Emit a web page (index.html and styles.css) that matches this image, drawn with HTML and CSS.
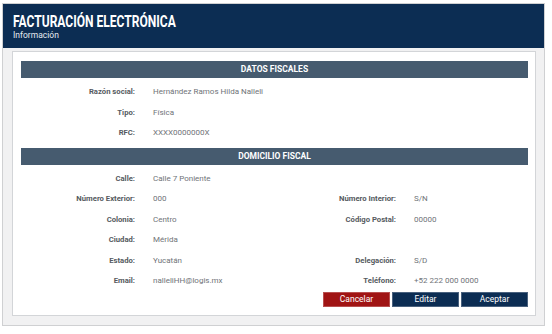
FILE: index.html
```html
<!DOCTYPE html>
<html lang="es">
<head>
<meta charset="utf-8">
<title>Facturación electrónica</title>
<link rel="stylesheet" href="styles.css">
</head>
<body>
<div class="frame">
  <header class="header">
    <h1 class="title"><span class="title-text">FACTURACIÓN ELECTRÓNICA</span></h1>
    <div class="subtitle">Información</div>
  </header>
  <main class="card">
    <section class="section">
      <div class="bar">DATOS FISCALES</div>
      <div class="grid">
        <div class="label">Razón social:</div><div class="value wide">Hernández Ramos Hilda Nalleli</div>
        <div class="label">Tipo:</div><div class="value wide">Física</div>
        <div class="label">RFC:</div><div class="value wide">XXXX0000000X</div>
      </div>
    </section>
    <section class="section">
      <div class="bar">DOMICILIO FISCAL</div>
      <div class="grid">
        <div class="label">Calle:</div><div class="value">Calle 7 Poniente</div><div class="label"></div><div class="value"></div>
        <div class="label">Número Exterior:</div><div class="value">000</div><div class="label">Número Interior:</div><div class="value">S/N</div>
        <div class="label">Colonia:</div><div class="value">Centro</div><div class="label">Código Postal:</div><div class="value">00000</div>
        <div class="label">Ciudad:</div><div class="value">Mérida</div><div class="label"></div><div class="value"></div>
        <div class="label">Estado:</div><div class="value">Yucatán</div><div class="label">Delegación:</div><div class="value">S/D</div>
        <div class="label">Email:</div><div class="value">nalleliHH@logis.mx</div><div class="label">Teléfono:</div><div class="value">+52 222 000 0000</div>
      </div>
    </section>
    <div class="actions">
      <button class="btn btn-cancel">Cancelar</button>
      <button class="btn btn-primary">Editar</button>
      <button class="btn btn-primary">Aceptar</button>
    </div>
  </main>
</div>
</body>
</html>
```

FILE: styles.css
```css
* { box-sizing: border-box; }
html, body { margin: 0; padding: 0; background: #ffffff; }
body {
  font-family: Roboto, "Liberation Sans", Arial, sans-serif;
  padding: 3px 7px 8px 2px;
}
.frame {
  border: 1px solid #cfd0d2;
  background: #f1f1f2;
  display: flex;
  flex-direction: column;
  height: 323px;
}
.header {
  background: #0c2d53;
  height: 44px;
  padding: 0 10px;
  color: #ffffff;
  display: flex;
  flex-direction: column;
  justify-content: center;
}
.title {
  margin: 0;
  font-size: 16.5px;
  line-height: 17px;
  font-weight: 700;
  white-space: nowrap;
  margin-top: 1px;
}
.title-text {
  display: inline-block;
  transform: scaleX(0.73);
  transform-origin: left center;
}
.subtitle {
  font-size: 8.5px;
  line-height: 10px;
  color: #e6ebf1;
}
.card {
  margin: 3px 8px 9px 9px;
  background: #ffffff;
  border: 1px solid #d3d5d8;
  padding: 9px 7px 8px 8px;
  flex: 1;
  display: flex;
  flex-direction: column;
}
.bar {
  background: #465b6f;
  color: #ffffff;
  height: 17px;
  line-height: 17px;
  text-align: center;
  font-size: 8.5px;
  font-weight: 700;
  margin-bottom: 3.5px;
}
.section { margin-bottom: 4.5px; }
.grid {
  display: grid;
  grid-template-columns: 114px 147px 114px 1fr;
  grid-auto-rows: 20.5px;
  align-items: center;
  font-size: 8px;
}
.label {
  text-align: right;
  font-weight: 700;
  font-size: 7.7px;
  color: #555a60;
}
.value {
  padding-left: 18px;
  color: #6f7378;
  white-space: nowrap;
}
.value.wide { grid-column: span 3; }
.actions {
  display: flex;
  justify-content: flex-end;
  gap: 2px;
  margin-top: -3.5px;
}
.btn {
  width: 67px;
  height: 15px;
  border: 1px solid rgba(255,255,255,0.25);
  color: #ffffff;
  font-family: Roboto, "Liberation Sans", Arial, sans-serif;
  font-size: 8.5px;
  padding: 0;
  line-height: 13px;
  cursor: pointer;
}
.btn-cancel { background: #a01414; }
.btn-primary { background: #0c2d53; }
```
